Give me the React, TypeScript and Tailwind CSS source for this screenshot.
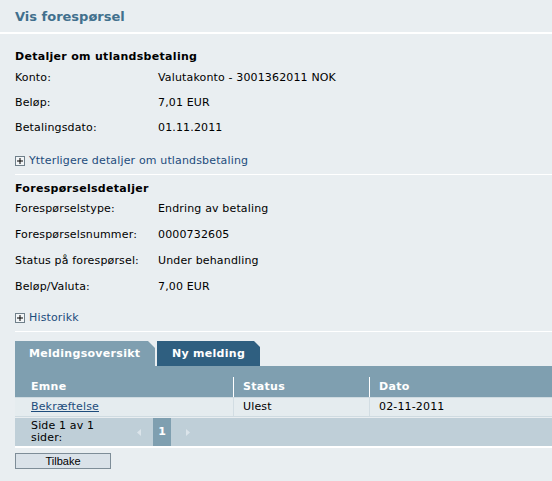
const DETALJER = [
  { label: 'Konto:', value: 'Valutakonto - 3001362011 NOK' },
  { label: 'Beløp:', value: '7,01 EUR' },
  { label: 'Betalingsdato:', value: '01.11.2011' },
];

const FORESPORSEL = [
  { label: 'Forespørselstype:', value: 'Endring av betaling' },
  { label: 'Forespørselsnummer:', value: '0000732605' },
  { label: 'Status på forespørsel:', value: 'Under behandling' },
  { label: 'Beløp/Valuta:', value: '7,00 EUR' },
];

const PlusBox = () => (
  <span className="mr-[4px] inline-flex h-[10px] w-[10px] shrink-0 items-center justify-center border border-[#6f7f8a] bg-[#f2f5f7]">
    <svg width="6" height="6" viewBox="0 0 6 6">
      <rect x="0" y="2.5" width="6" height="1" fill="#000" />
      <rect x="2.5" y="0" width="1" height="6" fill="#000" />
    </svg>
  </span>
);

const InfoRow = ({ label, value }: { label: string; value: string }) => (
  <div className="flex h-[18px] items-center leading-[18px] tracking-[0.15px]">
    <span className="w-[143px]">{label}</span>
    <span>{value}</span>
  </div>
);

export default function App() {
  return (
    <div className="min-h-[481px] w-[552px] bg-[#e9eef1] font-['DejaVu_Sans',Verdana,sans-serif] text-[11px] text-black">
      {/* Tittel */}
      <div className="flex h-[34px] items-center border-b-2 border-white px-[15px] pt-[1px]">
        <h1 className="text-[13px] font-bold text-[#41708d]">Vis forespørsel</h1>
      </div>

      <div className="pl-[15px]">
        {/* Detaljer om utlandsbetaling */}
        <div className="border-b border-white pb-[4px] pt-[14px]">
          <h2 className="h-[18px] font-bold leading-[18px] tracking-[0.3px]">Detaljer om utlandsbetaling</h2>
          <div className="mt-[3px] flex flex-col gap-[7px]">
            {DETALJER.map((r) => (
              <InfoRow key={r.label} {...r} />
            ))}
          </div>
          <a href="#" className="mt-[15px] flex h-[18px] items-center leading-[18px] tracking-[0.15px] text-[#1d4c7c]">
            <PlusBox />
            Ytterligere detaljer om utlandsbetaling
          </a>
        </div>

        {/* Forespørselsdetaljer */}
        <div className="border-b border-white pb-[4px] pt-[5px]">
          <h2 className="h-[18px] font-bold leading-[18px] tracking-[0.3px]">Forespørselsdetaljer</h2>
          <div className="mt-[2px] flex flex-col gap-[8px]">
            {FORESPORSEL.map((r) => (
              <InfoRow key={r.label} {...r} />
            ))}
          </div>
          <a href="#" className="mt-[13px] flex h-[18px] items-center leading-[18px] tracking-[0.15px] text-[#1d4c7c]">
            <PlusBox />
            Historikk
          </a>
        </div>

        {/* Faner */}
        <div className="mt-[9px] flex gap-[2px]">
          <div className="flex h-[25px] w-[140px] items-center bg-[#7f9fb0] pl-[14px] pt-[1px] font-bold tracking-[0.3px] text-white [clip-path:polygon(0_0,calc(100%-7px)_0,100%_7px,100%_100%,0_100%)]">
            Meldingsoversikt
          </div>
          <div className="flex h-[25px] w-[103px] items-center justify-center bg-[#2f5f80] pt-[1px] font-bold tracking-[0.3px] text-white [clip-path:polygon(0_0,calc(100%-6px)_0,100%_6px,100%_100%,0_100%)]">
            Ny melding
          </div>
        </div>

        <div className="bg-[#7f9fb0] pt-[11px]">
          <div className="grid h-[20px] grid-cols-[218px_136px_1fr] items-center font-bold tracking-[0.3px] text-white">
            <div className="pl-[16px]">Emne</div>
            <div className="flex h-full items-center border-l border-white pl-[9px]">Status</div>
            <div className="flex h-full items-center border-l border-white pl-[9px]">Dato</div>
          </div>
        </div>
        <div className="grid h-[20px] grid-cols-[218px_136px_1fr] items-center border-y border-[#cfdbe1] bg-[#e5ecef] tracking-[0.15px]">
          <div className="pl-[16px]">
            <a href="#" className="text-[#1d4c7c] underline">
              Bekræftelse
            </a>
          </div>
          <div className="flex h-full items-center border-l border-[#d2dde3] pl-[9px]">Ulest</div>
          <div className="flex h-full items-center border-l border-[#d2dde3] pl-[9px]">02-11-2011</div>
        </div>

        {/* Sidevelger */}
        <div className="mt-[1px] box-content flex h-[28px] items-stretch border-b-2 border-white bg-[#bfcfd8]">
          <div className="flex w-[122px] items-center pl-[16px] leading-[12.5px] tracking-[0.15px]">
            <span className="block w-[80px]">Side 1 av 1 sider:</span>
          </div>
          <div className="flex w-[16px] items-center">
            <svg width="4" height="7" viewBox="0 0 4 7">
              <polygon points="4,0 0,3.5 4,7" fill="#dbe4ea" />
            </svg>
          </div>
          <div className="flex w-[18px] items-center justify-center bg-[#7f9fb0] font-bold text-white">1</div>
          <div className="flex items-center pl-[15px]">
            <svg width="4" height="7" viewBox="0 0 4 7">
              <polygon points="0,0 4,3.5 0,7" fill="#dbe4ea" />
            </svg>
          </div>
        </div>

        <button
          type="button"
          className="mt-[5px] flex h-[16px] w-[96px] items-center justify-center border border-[#7e8d98] bg-[#dae2e9] font-['Liberation_Sans',Arial,sans-serif] text-[11px] leading-none text-black"
        >
          Tilbake
        </button>
      </div>
    </div>
  );
}
